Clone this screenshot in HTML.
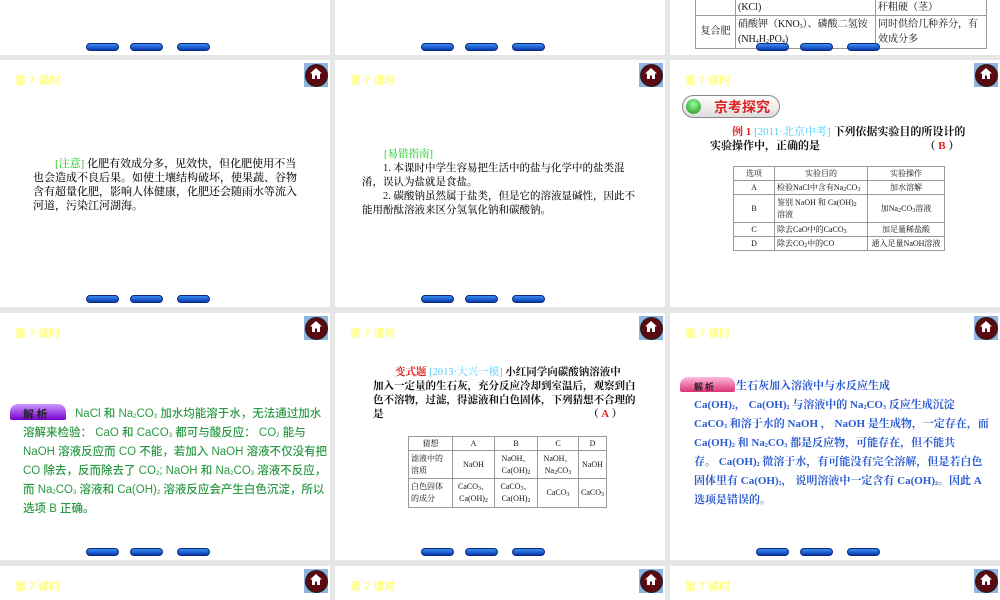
<!DOCTYPE html>
<html><head><meta charset="utf-8"><style>
*{margin:0;padding:0;box-sizing:border-box}
html,body{width:1000px;height:600px;overflow:hidden}
body{background:#e6e6e6;position:relative;font-family:"Liberation Serif","Noto Serif CJK SC","Noto Sans CJK SC",serif;color:#111}
.s{position:absolute;width:330px;height:247px;background:#fff;overflow:hidden}
.t{position:absolute;left:15px;top:12px;font:bold 11px "Liberation Sans","Noto Sans CJK SC",sans-serif;color:#ffff80}
.h{position:absolute;right:2px;top:3px;width:24px;height:24px;background:#8fb4e0}
.h:before{content:"";position:absolute;left:1px;top:1px;width:21px;height:21px;border-radius:50%;background:#5a0a10;border:1px solid #222}
.h svg{position:absolute;left:6px;top:5px}
.b{position:absolute;top:235px;width:33px;height:8px;border-radius:4px;background:linear-gradient(#3a8cf0,#0a3ab0);border:1px solid #0a2a80}
.p{position:absolute;font-size:11px;line-height:14px;white-space:nowrap;font-weight:500}
table{position:absolute;border-collapse:collapse;font-size:8px}
td{border:1px solid #999;padding:0 2px;text-align:center;line-height:12px}
sub{font-size:6px;vertical-align:-1px;line-height:0}
.g{position:absolute;font:11.5px "Liberation Sans","Noto Sans CJK SC",sans-serif;color:#2a9a44;line-height:19px;white-space:nowrap;font-weight:500}
.bl{position:absolute;font:bold 11px "Liberation Serif","Noto Serif CJK SC",serif;color:#2a5ad0;line-height:19px;white-space:nowrap}
</style></head><body>

<!-- row0 -->
<div class="s" style="left:0;top:-192px"><div class="b" style="left:86px"></div><div class="b" style="left:130px"></div><div class="b" style="left:177px"></div></div>
<div class="s" style="left:335px;top:-192px"><div class="b" style="left:86px"></div><div class="b" style="left:130px"></div><div class="b" style="left:177px"></div></div>
<div class="s" style="left:670px;top:-192px">
<table style="left:25px;top:170px;font-size:10px;width:292px">
<tr style="height:37px"><td style="width:40px">钾肥</td><td style="text-align:left;width:140px;vertical-align:bottom;line-height:14px">(KCl)</td><td style="text-align:left;vertical-align:bottom;line-height:14px">秆粗硬（茎）</td></tr>
<tr style="height:33px"><td>复合肥</td><td style="text-align:left;line-height:15px;white-space:nowrap">硝酸钾（KNO<sub>3</sub>）、磷酸二氢铵<br>(NH<sub>4</sub>H<sub>2</sub>PO<sub>4</sub>)</td><td style="text-align:left;line-height:15px">同时供给几种养分，有效成分多</td></tr>
</table>
<div class="b" style="left:86px"></div><div class="b" style="left:130px"></div><div class="b" style="left:177px"></div></div>

<!-- row1 -->
<div class="s" style="left:0;top:60px"><div class="t">第 7 课时</div><div class="h"><svg width="12" height="11" viewBox="0 0 12 11"><path d="M6 0L0 5.5h2V11h3V7.5h2V11h3V5.5h2z" fill="#fff"/></svg></div>
<div class="p" style="left:33px;top:97px">　　<span style="color:#3c3">[注意]</span> 化肥有效成分多，见效快，但化肥使用不当<br>也会造成不良后果。如使土壤结构破坏，使果蔬、谷物<br>含有超量化肥，影响人体健康，化肥还会随雨水等流入<br>河道，污染江河湖海。</div>
<div class="b" style="left:86px"></div><div class="b" style="left:130px"></div><div class="b" style="left:177px"></div></div>

<div class="s" style="left:335px;top:60px"><div class="t">第 7 课时</div><div class="h"><svg width="12" height="11" viewBox="0 0 12 11"><path d="M6 0L0 5.5h2V11h3V7.5h2V11h3V5.5h2z" fill="#fff"/></svg></div>
<div class="p" style="left:27px;top:88px;font-size:10.5px"><span style="padding-left:22px;color:#3c3">[易错指南]</span><br>　　1. 本课时中学生容易把生活中的盐与化学中的盐类混<br>淆，误认为盐就是食盐。<br>　　2. 碳酸钠虽然属于盐类，但是它的溶液显碱性，因此不<br>能用酚酞溶液来区分氢氧化钠和碳酸钠。</div>
<div class="b" style="left:86px"></div><div class="b" style="left:130px"></div><div class="b" style="left:177px"></div></div>

<div class="s" style="left:670px;top:60px"><div class="t">第 7 课时</div><div class="h"><svg width="12" height="11" viewBox="0 0 12 11"><path d="M6 0L0 5.5h2V11h3V7.5h2V11h3V5.5h2z" fill="#fff"/></svg></div>
<div style="position:absolute;left:12px;top:35px;width:98px;height:23px;border-radius:12px;border:1px solid #888;background:linear-gradient(#fff,#ddd)"></div>
<div style="position:absolute;left:16px;top:39px;width:15px;height:15px;border-radius:50%;background:radial-gradient(circle at 50% 35%,#9f9,#1a8a1a)"></div>
<div style="position:absolute;left:44px;top:37px;font:bold 14px 'Noto Sans CJK SC',sans-serif;color:#d22">京考探究</div>
<div class="p" style="left:40px;top:65px;font-size:11px;font-weight:bold"><span style="padding-left:22px;color:#d22">例 1</span> <span style="color:#5cf;font-weight:normal">[2011·北京中考]</span> 下列依据实验目的所设计的<br>实验操作中，正确的是　　　　　　　　　　（ <b style="color:#d22">B</b> ）</div>
<table style="left:63px;top:106px;width:212px">
<tr style="height:14px"><td style="width:41px">选项</td><td style="width:93px">实验目的</td><td>实验操作</td></tr>
<tr style="height:14px"><td>A</td><td style="text-align:left">检验NaCl中含有Na<sub>2</sub>CO<sub>3</sub></td><td>加水溶解</td></tr>
<tr style="height:28px"><td>B</td><td style="text-align:left">鉴别 NaOH 和 Ca(OH)<sub>2</sub> 溶液</td><td>加Na<sub>2</sub>CO<sub>3</sub>溶液</td></tr>
<tr style="height:14px"><td>C</td><td style="text-align:left">除去CaO中的CaCO<sub>3</sub></td><td>加足量稀盐酸</td></tr>
<tr style="height:14px"><td>D</td><td style="text-align:left">除去CO<sub>2</sub>中的CO</td><td>通入足量NaOH溶液</td></tr>
</table></div>

<!-- row2 -->
<div class="s" style="left:0;top:313px"><div class="t">第 7 课时</div><div class="h"><svg width="12" height="11" viewBox="0 0 12 11"><path d="M6 0L0 5.5h2V11h3V7.5h2V11h3V5.5h2z" fill="#fff"/></svg></div>
<div style="position:absolute;left:10px;top:91px;width:56px;height:16px;background:linear-gradient(#c9f,#70c);border-radius:8px 8px 2px 2px;color:#222;font:bold 11px 'Noto Sans CJK SC',sans-serif;padding:2px 0 0 13px">解 析</div>
<div class="g" style="left:23px;top:92px"><span style="padding-left:52px"></span>NaCl 和 Na<sub>2</sub>CO<sub>3</sub> 加水均能溶于水，无法通过加水<br>溶解来检验： CaO 和 CaCO<sub>3</sub> 都可与酸反应： CO<sub>2</sub> 能与<br>NaOH 溶液反应而 CO 不能，若加入 NaOH 溶液不仅没有把<br>CO 除去，反而除去了 CO<sub>2</sub>; NaOH 和 Na<sub>2</sub>CO<sub>3</sub> 溶液不反应，<br>而 Na<sub>2</sub>CO<sub>3</sub> 溶液和 Ca(OH)<sub>2</sub> 溶液反应会产生白色沉淀，所以<br>选项 B 正确。</div>
<div class="b" style="left:86px"></div><div class="b" style="left:130px"></div><div class="b" style="left:177px"></div></div>

<div class="s" style="left:335px;top:313px"><div class="t">第 7 课时</div><div class="h"><svg width="12" height="11" viewBox="0 0 12 11"><path d="M6 0L0 5.5h2V11h3V7.5h2V11h3V5.5h2z" fill="#fff"/></svg></div>
<div class="p" style="left:38px;top:53px;font-size:10.5px;font-weight:bold"><span style="padding-left:22px;color:#d22">变式题</span> <span style="color:#5cf;font-weight:normal">[2013·大兴一模]</span> 小红同学向碳酸钠溶液中<br>加入一定量的生石灰，充分反应冷却到室温后，观察到白<br>色不溶物，过滤，得滤液和白色固体，下列猜想不合理的<br>是　　　　　　　　　　　　　　　　　　　　（ <b style="color:#d22">A</b> ）</div>
<table style="left:73px;top:123px;width:199px">
<tr style="height:14px"><td style="width:44px">猜想</td><td style="width:42px">A</td><td style="width:43px">B</td><td style="width:41px">C</td><td>D</td></tr>
<tr style="height:28px"><td style="text-align:left">滤液中的溶质</td><td>NaOH</td><td>NaOH、Ca(OH)<sub>2</sub></td><td>NaOH、Na<sub>2</sub>CO<sub>3</sub></td><td>NaOH</td></tr>
<tr style="height:29px"><td style="text-align:left">白色固体的成分</td><td>CaCO<sub>3</sub>、Ca(OH)<sub>2</sub></td><td>CaCO<sub>3</sub>、Ca(OH)<sub>2</sub></td><td>CaCO<sub>3</sub></td><td>CaCO<sub>3</sub></td></tr>
</table>
<div class="b" style="left:86px"></div><div class="b" style="left:130px"></div><div class="b" style="left:177px"></div></div>

<div class="s" style="left:670px;top:313px"><div class="t">第 7 课时</div><div class="h"><svg width="12" height="11" viewBox="0 0 12 11"><path d="M6 0L0 5.5h2V11h3V7.5h2V11h3V5.5h2z" fill="#fff"/></svg></div>
<div style="position:absolute;left:10px;top:64px;width:55px;height:15px;background:linear-gradient(#fbd,#d37);border-radius:8px 8px 2px 2px;color:#222;font:bold 9px 'Noto Sans CJK SC',sans-serif;padding:3px 0 0 14px">解 析</div>
<div class="bl" style="left:24px;top:64px"><span style="padding-left:42px"></span>生石灰加入溶液中与水反应生成<br>Ca(OH)<sub>2</sub>， Ca(OH)<sub>2</sub> 与溶液中的 Na<sub>2</sub>CO<sub>3</sub> 反应生成沉淀<br>CaCO<sub>3</sub> 和溶于水的 NaOH ， NaOH 是生成物，一定存在，而<br>Ca(OH)<sub>2</sub> 和 Na<sub>2</sub>CO<sub>3</sub> 都是反应物，可能存在，但不能共<br>存。 Ca(OH)<sub>2</sub> 微溶于水，有可能没有完全溶解，但是若白色<br>固体里有 Ca(OH)<sub>2</sub>， 说明溶液中一定含有 Ca(OH)<sub>2</sub>。因此 A<br>选项是错误的。</div>
<div class="b" style="left:86px"></div><div class="b" style="left:130px"></div><div class="b" style="left:177px"></div></div>

<!-- row3 -->
<div class="s" style="left:0;top:566px;height:34px"><div class="t">第 7 课时</div><div class="h"><svg width="12" height="11" viewBox="0 0 12 11"><path d="M6 0L0 5.5h2V11h3V7.5h2V11h3V5.5h2z" fill="#fff"/></svg></div></div>
<div class="s" style="left:335px;top:566px;height:34px"><div class="t">第 7 课时</div><div class="h"><svg width="12" height="11" viewBox="0 0 12 11"><path d="M6 0L0 5.5h2V11h3V7.5h2V11h3V5.5h2z" fill="#fff"/></svg></div></div>
<div class="s" style="left:670px;top:566px;height:34px"><div class="t">第 7 课时</div><div class="h"><svg width="12" height="11" viewBox="0 0 12 11"><path d="M6 0L0 5.5h2V11h3V7.5h2V11h3V5.5h2z" fill="#fff"/></svg></div></div>
</body></html>
